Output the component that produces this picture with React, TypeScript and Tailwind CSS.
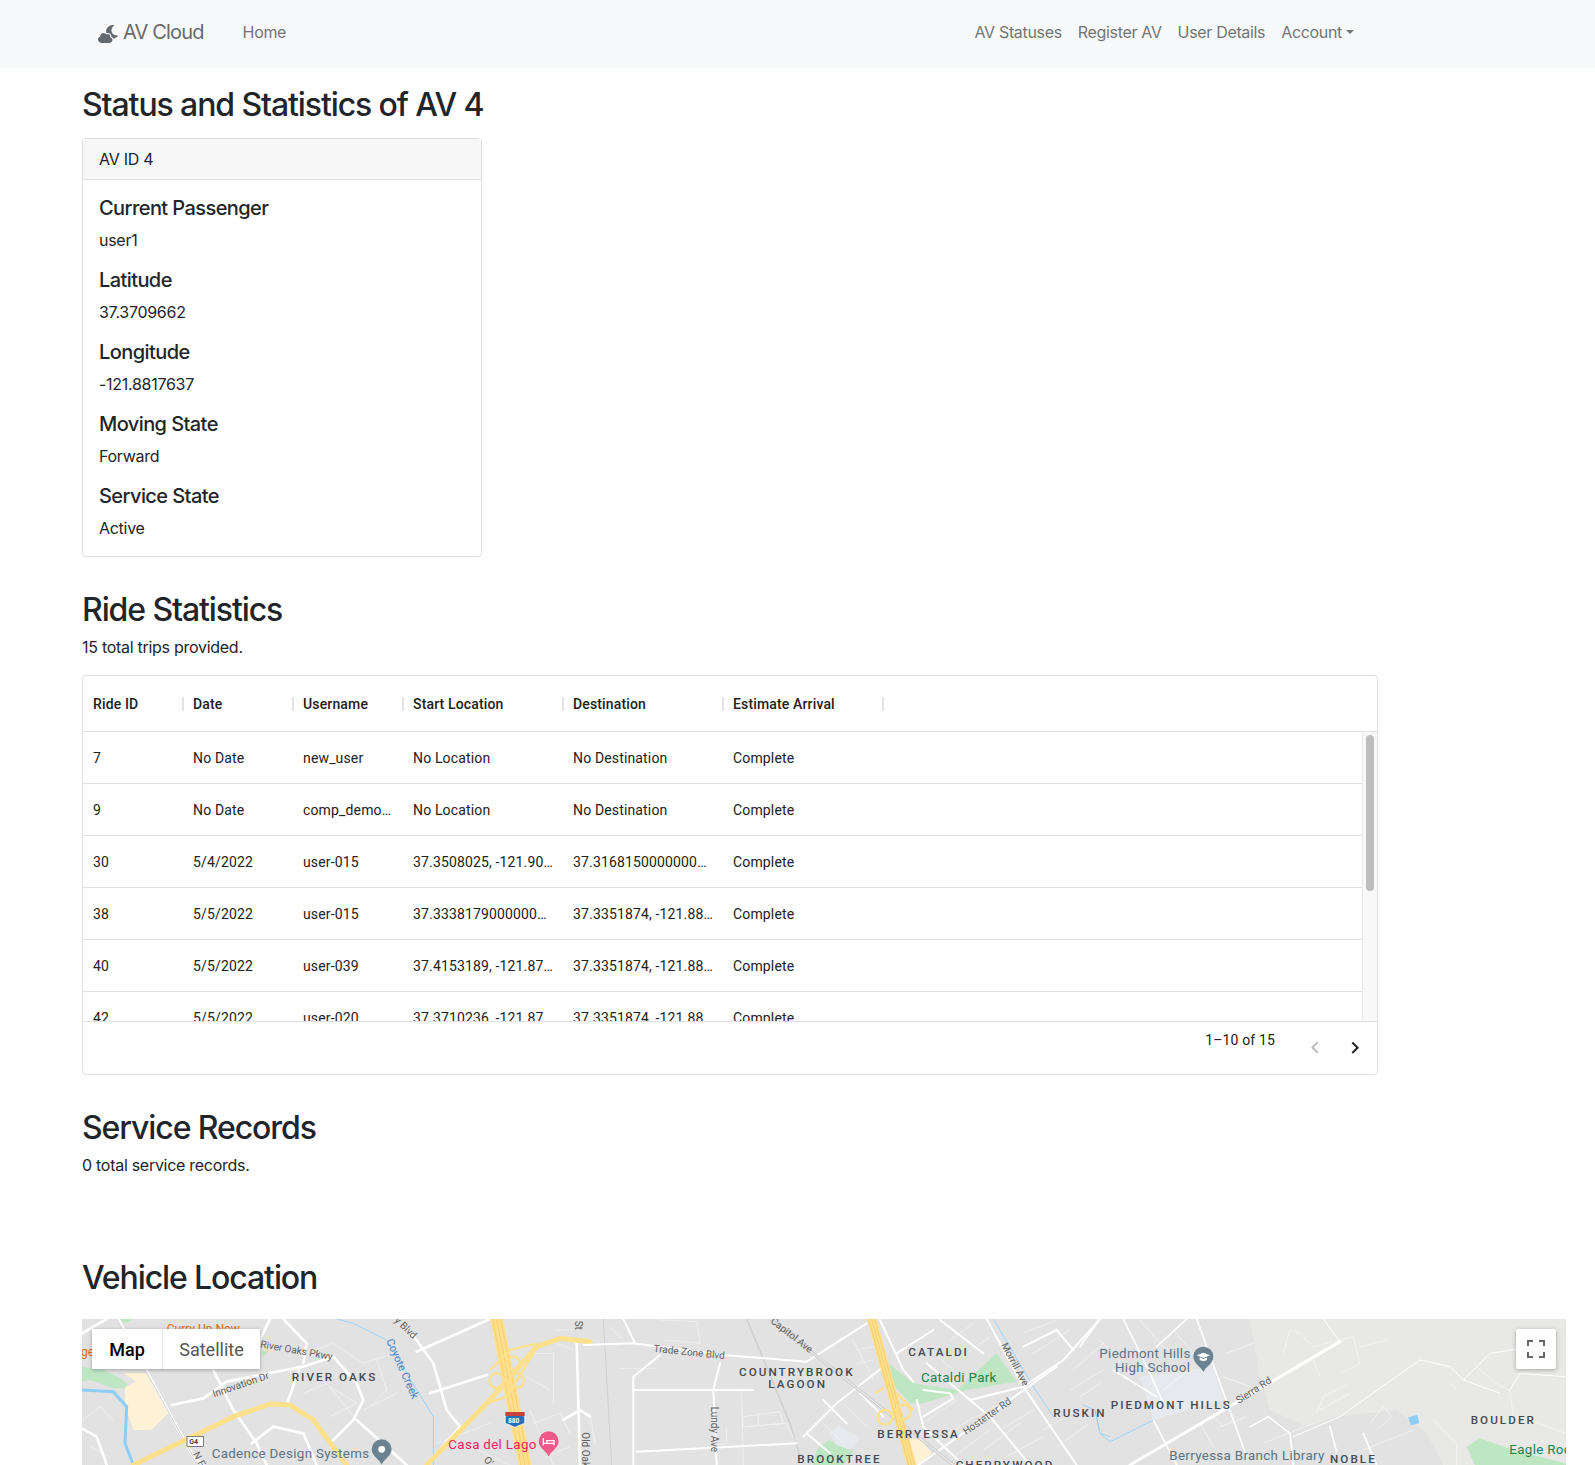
import React from 'react';
import { FaCloudMoon } from 'react-icons/fa';

const SANS = { fontFamily: 'Inter, "Noto Sans", sans-serif' };

const specs = [
  { label: 'Current Passenger', value: 'user1' },
  { label: 'Latitude', value: '37.3709662' },
  { label: 'Longitude', value: '-121.8817637' },
  { label: 'Moving State', value: 'Forward' },
  { label: 'Service State', value: 'Active' },
];

const columns = [
  { name: 'Ride ID', width: 'w-[100px]' },
  { name: 'Date', width: 'w-[110px]' },
  { name: 'Username', width: 'w-[110px]' },
  { name: 'Start Location', width: 'w-[160px]' },
  { name: 'Destination', width: 'w-[160px]' },
  { name: 'Estimate Arrival', width: 'w-[160px]' },
];

const rides = [
  ['7', 'No Date', 'new_user', 'No Location', 'No Destination', 'Complete'],
  ['9', 'No Date', 'comp_demo_user', 'No Location', 'No Destination', 'Complete'],
  ['30', '5/4/2022', 'user-015', '37.3508025, -121.9012345', '37.316815000000005, -121.9', 'Complete'],
  ['38', '5/5/2022', 'user-015', '37.333817900000005, -121.9', '37.3351874, -121.8810799', 'Complete'],
  ['40', '5/5/2022', 'user-039', '37.4153189, -121.8790123', '37.3351874, -121.8810799', 'Complete'],
  ['42', '5/5/2022', 'user-020', '37.3710236, -121.8790123', '37.3351874, -121.8810799', 'Complete'],
];

const Heading = ({ children, className = '' }: { children: React.ReactNode; className?: string }) => (
  <h2 className={`text-[32px] leading-[38px] font-[450] tracking-[-1.1px] text-[#212529] ${className}`}>{children}</h2>
);

const Navbar = () => (
  <nav className="h-[68px] bg-[#f8f9fa] flex items-center pb-[4px] pl-[98px] pr-[241px] text-base tracking-[-0.33px] text-[#737576]">
    <FaCloudMoon className="w-[20px] h-[20px] mt-[4px] text-[#626a70]" />
    <span className="ml-[5px] text-xl tracking-[-0.85px] text-[#666b70]">AV Cloud</span>
    <a className="ml-[39px]">Home</a>
    <div className="ml-auto flex items-center gap-[16px]">
      <a>AV Statuses</a>
      <a>Register AV</a>
      <a>User Details</a>
      <a className="flex items-center">
        Account
        <span className="ml-[4px] w-0 h-0 border-x-[4.5px] border-x-transparent border-t-[4.5px] border-t-[#737576]" />
      </a>
    </div>
  </nav>
);

const StatusCard = () => (
  <div className="mt-[14px] w-[400px] border border-[#dfdfdf] rounded-[4px] overflow-hidden">
    <div className="h-[41px] bg-[#f7f7f7] border-b border-[#dfdfdf] px-4 flex items-center text-base">AV ID 4</div>
    <div className="p-4 pb-[16px]">
      {specs.map((s, i) => (
        <div key={s.label} className={i < specs.length - 1 ? 'mb-4' : ''}>
          <h5 className="text-xl leading-6 font-[450] tracking-[-0.58px] mb-2">{s.label}</h5>
          <p className="text-base leading-6">{s.value}</p>
        </div>
      ))}
    </div>
  </div>
);

const RideGrid = () => (
  <div
    className="mt-[16px] w-[1296px] h-[400px] border border-[#e0e0e0] rounded-[4px] flex flex-col text-sm text-[#212121] tracking-[0.15px] overflow-hidden"
    style={{ fontFamily: 'Roboto, sans-serif' }}
  >
    <div className="h-[56px] shrink-0 border-b border-[#e0e0e0] flex items-center">
      {columns.map((c) => (
        <div key={c.name} className={`${c.width} relative px-[10px] font-medium`}>
          {c.name}
          <span className="absolute right-[-1px] top-[3px] h-[14px] w-[2px] bg-[#e2e2e2]" />
        </div>
      ))}
    </div>
    <div className="h-[289px] shrink-0 flex overflow-hidden">
      <div className="flex-1">
        {rides.map((r) => (
          <div key={r[0]} className="h-[52px] border-b border-[#e0e0e0] flex items-center shrink-0">
            {r.map((cell, i) => (
              <div key={i} className={`${columns[i].width} px-[10px] truncate`}>{cell}</div>
            ))}
          </div>
        ))}
      </div>
      <div className="w-[15px] bg-[#f8f8f8] border-l border-[#e8e8e8] pt-[3px] px-[3px]">
        <div className="h-[156px] rounded-full bg-[#bdbdbd]" />
      </div>
    </div>
    <div className="h-[53px] border-t border-[#e0e0e0] flex justify-end pr-[10px]">
      <span className="mt-[8px] mr-[28px] leading-5 tracking-[0.15px]">1–10 of 15</span>
      <div className="mt-[14px] flex gap-[16px]">
        <svg viewBox="0 0 24 24" className="w-6 h-6 fill-[#bdbdbd]">
          <path d="M15.41 16.09l-4.58-4.59 4.58-4.59L14 5.5l-6 6 6 6z" />
        </svg>
        <svg viewBox="0 0 24 24" className="w-6 h-6 fill-[#212121]">
          <path d="M8.59 16.34l4.58-4.59-4.58-4.59L10 5.75l6 6-6 6z" />
        </svg>
      </div>
    </div>
  </div>
);

const roads5 = [
  'M36 70L110 27', 'M145 27L370 440L400 465', 'M430 180L490 300L560 400L590 465', 'M305 285L400 265L470 215L620 185L700 170L790 140L860 220L880 270L850 330L780 400',
  'M690 170L650 285', 'M700 160L710 100L640 27', 'M1010 50L1090 160L1130 300L1170 350', 'M1170 350L1070 465', 'M1040 125L1260 27', 'M1080 250L1250 195',
  'M36 355L80 380L110 465', 'M545 400L610 350L700 370L740 465', 'M1520 90L1530 465', 'M860 330L1010 465', 'M1480 330L1530 300L1560 320',
  'M600 27L560 110',
];
const thin5 = [
  'M700 250L770 220L860 330', 'M710 130L790 100L880 160L970 130', 'M880 300L980 250', 'M40 330L90 290L130 330', 'M1380 300L1450 465', 'M1450 130L1450 280', 'M1180 400L1320 465',
  'M780 230L860 280L780 320', 'M920 150L950 240L900 290', 'M1460 60L1510 60', 'M1460 100L1510 120', 'M60 410L120 440',
  'M1370 200L1440 240', 'M1390 340L1470 310L1500 370', 'M1430 440L1500 410', 'M1390 130L1450 130', 'M1100 400L1260 340',
];
const roads6 = [
  'M-20 105L130 100L400 135L650 155L830 40', 'M135 100L100 27', 'M210 135L130 200L130 465', 'M390 160L370 240L380 465', 'M130 240L490 240', 'M140 425L620 400',
  'M870 30L940 180L970 215', 'M640 380L740 280L880 170', 'M1000 240L1080 250L1090 265L1000 320', 'M1010 160L1140 270L1300 230L1420 150L1530 27',
  'M1190 27L1300 230L1460 465', 'M985 465L1400 170', 'M980 270L1000 350L1120 465', 'M1140 270L1200 320L1320 465', 'M1050 30L1180 130', 'M920 130L1030 60',
  'M700 270L770 340', 'M810 250L880 320', 'M650 370L720 430', 'M1300 110L1400 60L1450 120',
];
const thin6 = [
  'M460 320L570 305L580 340L460 350Z', 'M505 310L505 345', 'M455 240L460 465', 'M470 350L590 340L620 400', 'M210 30L320 35L330 100L220 90', 'M60 50L100 90', 'M790 90L850 210', 'M410 350L410 400L380 405',
  'M1360 360L1460 300', 'M1230 360L1330 300', 'M1160 320L1260 260', 'M1400 410L1500 340', 'M1340 200L1440 140', 'M1450 180L1540 100',
  'M0 310L15 400', 'M90 175L200 175',
  'M1080 90L1150 40', 'M1130 130L1200 80', 'M1000 340L1100 270', 'M1040 400L1150 320', 'M1090 440L1200 360', 'M1180 420L1290 340', 'M1250 440L1360 380', 'M1330 130L1440 60',
  'M1300 70L1400 30', 'M1440 240L1540 180', 'M1010 110L1090 180', 'M700 340L760 400', 'M760 280L830 350', 'M800 120L850 110', 'M800 160L850 150',
];
const roads7 = [
  'M350 27L420 220L500 440', 'M0 110L60 27', 'M130 27L210 190L250 280', 'M510 350L565 320L630 370L640 465',
  'M220 330L290 465', 'M750 350L770 425', 'M850 370L890 465', 'M230 110L320 27', 'M100 180L230 260',
];
const hills7 = [
  'M640 380L780 320L920 220L1020 150L1110 170L1150 210L1260 250', 'M1150 210L1230 130L1320 115', 'M1290 240L1320 190L1457 200', 'M730 27L780 95',
];
const thin7 = [
  'M610 130L630 60L660 70L700 110L820 80', 'M820 80L840 160L785 190', 'M840 110L920 90', 'M700 150L720 200', 'M710 310L730 260L800 225', 'M720 300L810 250', 'M870 340L910 290L935 320L890 360',
  'M1110 215L1130 240', 'M1290 240L1300 320L1350 330L1457 370', 'M1060 330L1130 400L1130 465', 'M440 130L520 100', 'M430 200L510 230', 'M360 340L400 410', 'M400 320L430 350', 'M1180 160L1240 215L1285 240',
  'M0 260L60 220', 'M60 90L150 190', 'M180 30L260 120', 'M280 60L340 130', 'M250 240L340 170', 'M420 350L500 320', 'M550 400L700 340', 'M800 440L1000 360',
];

const Pin = ({ x, y, fill, children }: { x: number; y: number; fill: string; children?: React.ReactNode }) => (
  <g transform={`translate(${x} ${y})`}>
    <path d="M0 44C-6 28 -30 18 -30 -2A30 30 0 0 1 30 -2C30 18 6 28 0 44Z" fill={fill} />
    {children}
  </g>
);

const T = ({ x, y, s = 30, c = '#5f5f5f', w = 400, ls = 0, r, children }: { x: number; y: number; s?: number; c?: string; w?: number; ls?: number; r?: number; children: React.ReactNode }) => (
  <text x={x} y={y} fontSize={s} fill={c} fontWeight={w} letterSpacing={ls} transform={r ? `rotate(${r} ${x} ${y})` : undefined} fontFamily="Roboto, sans-serif">
    {children}
  </text>
);

// neighbourhood labels and POI labels keep one look across the map
const Area = ({ x, y, children }: { x: number; y: number; children: React.ReactNode }) => (
  <T x={x} y={y} s={35} c="#444a52" w={500} ls={6.2}>{children}</T>
);
const Poi = ({ x, y, c = '#5b7383', children }: { x: number; y: number; c?: string; children: React.ReactNode }) => (
  <T x={x} y={y} s={40} c={c} ls={1}>{children}</T>
);

const Lines = ({ d, width, color = '#fff' }: { d: string[]; width: number; color?: string }) => (
  <g fill="none" stroke={color} strokeWidth={width} strokeLinejoin="round" strokeLinecap="round">
    {d.map((p) => <path key={p} d={p} />)}
  </g>
);

const HIGHWAY = '#fde08c';
const STRIPE = '#f5c566';

const MapArt = () => (
  <svg viewBox="82 1319 1484 146" className="block w-full h-full" preserveAspectRatio="none">
    <rect x="82" y="1319" width="1484" height="146" fill="#e2e2e2" />
    <g transform="translate(1080 1310) scale(0.33333)">
      <path d="M510 27L1457 27L1457 465L1090 465L1040 370L950 300L770 320L680 350L570 300L540 200Z" fill="#e8e8e6" />
      <path d="M180 200L400 170L430 270L220 330Z" fill="#e6e9ee" />
      <path d="M985 322L1012 315L1018 340L992 346Z" fill="#8ecdf5" />
      <path d="M1160 410L1200 385L1300 420L1457 460L1457 465L1185 465Z" fill="#bfe6c3" />
    </g>
    <g transform="translate(590 1310) scale(0.33333)">
      <path d="M890 155L970 220L1100 240L1220 130L1280 215L1130 240L1000 280L960 280L890 200Z" fill="#bfe6c3" />
      <path d="M680 420L715 390L745 405L780 405L790 430L760 465L670 465Z" fill="#bfe6c3" />
      <path d="M720 370L745 345L810 385L780 420L740 405Z" fill="#e6e9ee" />
      <path d="M950 390L990 385L1025 430L985 465L970 465Z" fill="#fdf1d6" />
      <path d="M1210 27L1330 230L1390 320" fill="none" stroke="#9cd3f7" strokeWidth="3" />
      <path d="M1480 285L1515 300L1530 370L1560 380" fill="none" stroke="#9cd3f7" strokeWidth="3" />
      <path d="M470 27L600 340L630 440" fill="none" stroke="#cfd0d2" strokeWidth="5" />
      <path d="M40 27L65 465" fill="none" stroke="#cfd0d2" strokeWidth="3" />
    </g>
    <g transform="translate(70 1310) scale(0.33333)">
      <path d="M36 170L100 180L160 210L180 235L130 235L60 210L36 215Z" fill="#bfe6c3" />
      <path d="M160 190L235 190L295 310L245 360L190 360L165 290L165 230L200 215Z" fill="#fdf1d6" />
      <path d="M36 240L130 245L170 290L165 400L190 465" fill="none" stroke="#8ecdf5" strokeWidth="9" />
      <path d="M800 27L850 40L950 90L1010 190L1090 320L1090 465" fill="none" stroke="#9cd3f7" strokeWidth="3" />
      <path d="M570 125L600 120L580 140Z" fill="#bfe6c3" />
      <path d="M140 27L190 27L165 40Z" fill="#bfe6c3" />
      <Lines d={thin5} width={2} color="#f4f4f4" />
      <Lines d={roads5} width={8} />
      <path d="M140 27L370 440" fill="none" stroke="#cfd0d2" strokeWidth="3" />
      <Lines d={['M190 465L490 320L600 282L660 285L730 330L830 465']} width={15} color={HIGHWAY} />
      <Lines d={['M1070 465L1255 275L1400 110L1470 85L1560 95']} width={15} color={HIGHWAY} />
      <Lines d={['M1280 27L1365 465']} width={38} color={HIGHWAY} />
      <Lines d={['M1268 27L1353 465', 'M1280 27L1365 465', 'M1292 27L1377 465']} width={2} color={STRIPE} />
      <g fill="none" stroke={HIGHWAY} strokeWidth="7">
        <circle cx="1280" cy="212" r="22" />
        <circle cx="1340" cy="212" r="22" />
        <circle cx="1330" cy="160" r="20" />
        <path d="M1260 180L1320 120L1400 100" />
        <path d="M1250 280L1310 260L1390 130" />
      </g>
      <rect x="351" y="379" width="50" height="30" fill="#fff" stroke="#444" strokeWidth="2" />
      <T x={358} y={402} s={21} c="#444" w={700}>G4</T>
      <path d="M1306 318Q1335 310 1364 318L1364 340Q1350 345 1335 352Q1320 345 1306 340Z" fill="#2a6ebb" stroke="#fff" strokeWidth="2" />
      <path d="M1306 306H1364V318H1306Z" fill="#c5413a" />
      <T x={1314} y={338} s={20} c="#fff" w={700}>880</T>
      <T x={290} y={70} s={36} c="#d96c13">Curry Up Now</T>
      <T x={33} y={137} s={36} c="#d96c13">ge</T>
      <T x={570} y={112} r={10}>River Oaks Pkwy</T>
      <T x={432} y={262} r={-19}>Innovation Dr</T>
      <Area x={665} y={213}>RIVER OAKS</Area>
      <T x={948} y={92} s={33} c="#4a82c4" r={66}>Coyote Creek</T>
      <T x={972} y={33} r={44}>y Blvd</T>
      <T x={368} y={432} r={62}>N F</T>
      <Poi x={425} y={443}>Cadence Design Systems</Poi>
      <Pin x={935} y={420} fill="#6b8391"><circle r="10" cy="-2" fill="#fff" /></Pin>
      <Poi x={1135} y={418} c="#e91e63">Casa del Lago</Poi>
      <Pin x={1436} y={396} fill="#ef5a8a"><path d="M-16 -12V10M-16 4H16V10M16 4V-4H-6V4" stroke="#fff" strokeWidth="4" fill="none" /></Pin>
      <T x={1535} y={367} r={90}>Old Oak</T>
      <T x={1515} y={32} r={90}>St</T>
      <T x={1240} y={450} r={50}>O'</T>
    </g>
    <g transform="translate(590 1310) scale(0.33333)">
      <Lines d={thin6} width={2} color="#f4f4f4" />
      <Lines d={roads6} width={6} />
      <path d="M540 27L1090 465" fill="none" stroke="#cfd0d2" strokeWidth="9" />
      <path d="M540 27L1090 465" fill="none" stroke="#f2f2f2" strokeWidth="3" />
      <Lines d={['M845 27L965 465']} width={28} color={HIGHWAY} />
      <Lines d={['M836 27L956 465', 'M845 27L965 465', 'M854 27L974 465']} width={2} color={STRIPE} />
      <g fill="none" stroke={HIGHWAY} strokeWidth="7">
        <circle cx="885" cy="322" r="22" />
        <circle cx="940" cy="306" r="22" />
        <path d="M855 250L880 235" />
        <path d="M920 250L970 300" />
      </g>
      <T x={190} y={125} r={6}>Trade Zone Blvd</T>
      <T x={540} y={37} r={38}>Capitol Ave</T>
      <Area x={447} y={197}>COUNTRYBROOK</Area>
      <Area x={535} y={235}>LAGOON</Area>
      <Area x={955} y={137}>CATALDI</Area>
      <Poi x={993} y={215} c="#1e8348">Cataldi Park</Poi>
      <T x={1233} y={105} r={62}>Morrill Ave</T>
      <T x={1128} y={375} r={-35}>Hostetter Rd</T>
      <Area x={1390} y={320}>RUSKIN</Area>
      <Area x={862} y={385}>BERRYESSA</Area>
      <T x={362} y={290} r={90}>Lundy Ave</T>
      <Area x={622} y={460}>BROOKTREE</Area>
      <Area x={1097} y={477}>CHERRYWOOD</Area>
    </g>
    <g transform="translate(1080 1310) scale(0.33333)">
      <Lines d={thin7} width={2} color="#f7f7f7" />
      <Lines d={hills7} width={3} />
      <Lines d={roads7} width={5} />
      <Lines d={['M150 465L780 95']} width={9} />
      <path d="M45 300L60 370L90 395L220 330" fill="none" stroke="#9cd3f7" strokeWidth="3" />
      <Poi x={58} y={145}>Piedmont Hills</Poi>
      <Poi x={105} y={187}>High School</Poi>
      <Pin x={370} y={142} fill="#6b8391">
        <path d="M-20 -6L0 -14L20 -6L0 2Z" fill="#fff" />
        <path d="M-11 0V8Q0 14 11 8V0L0 5Z" fill="#fff" />
      </Pin>
      <Area x={92} y={297}>PIEDMONT HILLS</Area>
      <T x={476} y={282} r={-33}>Sierra Rd</T>
      <Area x={1172} y={342}>BOULDER</Area>
      <Poi x={1288} y={433} c="#1e8348">Eagle Rock</Poi>
      <Poi x={268} y={450}>Berryessa Branch Library</Poi>
      <Area x={750} y={460}>NOBLE</Area>
    </g>
  </svg>
);

const LocationMap = () => (
  <div className="relative mt-[22px] w-[1484px] h-[146px] overflow-hidden" style={{ fontFamily: 'Roboto, sans-serif' }}>
    <MapArt />
    <div className="absolute left-[10px] top-[10px] flex h-[40px] bg-white shadow-[0_1px_4px_rgba(0,0,0,0.3)] text-lg tracking-normal">
      <span className="w-[71px] pt-[2px] flex items-center justify-center font-medium text-black border-r border-[#e6e6e6]">Map</span>
      <span className="w-[97px] pt-[2px] flex items-center justify-center text-[#565656]">Satellite</span>
    </div>
    <div className="absolute right-[10px] top-[10px] w-[40px] h-[40px] bg-white rounded-[2px] shadow-[0_1px_4px_rgba(0,0,0,0.3)] flex items-center justify-center">
      <svg viewBox="0 0 18 18" className="w-[18px] h-[18px] fill-[#666]">
        <path d="M0 0h6v2H2v4H0zM12 0h6v6h-2V2h-4zM0 12h2v4h4v2H0zM16 12h2v6h-6v-2h4z" />
      </svg>
    </div>
  </div>
);

const App: React.FC = () => {
  return (
    <div className="h-[1465px] overflow-hidden bg-white text-[#212529] tracking-[-0.28px]" style={SANS}>
      <Navbar />
      <main className="pl-[82px]">
        <Heading className="pt-[18px]">Status and Statistics of AV 4</Heading>
        <StatusCard />
        <Heading className="mt-[34px]">Ride Statistics</Heading>
        <p className="mt-[6px] text-base leading-6">15 total trips provided.</p>
        <RideGrid />
        <Heading className="mt-[34px]">Service Records</Heading>
        <p className="mt-[6px] text-base leading-6">0 total service records.</p>
        <Heading className="mt-[82px]">Vehicle Location</Heading>
        <LocationMap />
      </main>
    </div>
  );
};

export default App;
